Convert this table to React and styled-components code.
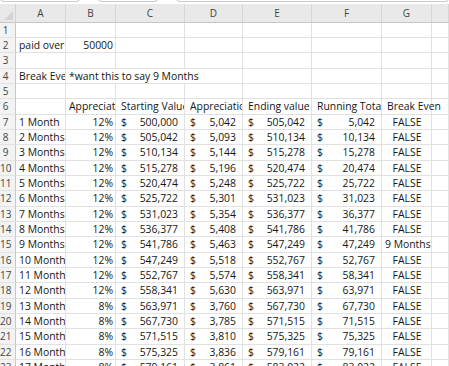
import React from 'react';
import styled, { createGlobalStyle } from 'styled-components';

const GlobalStyle = createGlobalStyle`
  html, body {
    margin: 0;
    padding: 0;
    background: #ffffff;
    overflow: hidden;
  }
`;

const COLS = '16px 50px 50px 69px 58px 69px 70px 50px 1fr';
const ROW_H = '15.35px';

const Window = styled.div`
  width: 449px;
  height: 366px;
  overflow: hidden;
  font-family: "Open Sans", "Liberation Sans", sans-serif;
  font-size: 10.4px;
  color: #161616;
`;

const TopStrip = styled.div`
  height: 4px;
  display: flex;
  gap: 18px;
  background: #ffffff;
  overflow: hidden;
`;

const BarBox = styled.div`
  width: ${(p) => p.$w}px;
  flex: ${(p) => (p.$grow ? '1' : 'none')};
  height: 2px;
  margin-top: -2px;
  border: 1px solid #c9c9c9;
  border-radius: 0 0 4px 4px;
`;

const Sheet = styled.div`
  display: grid;
  grid-template-columns: ${COLS};
  grid-template-rows: 18.5px;
  grid-auto-rows: ${ROW_H};
`;

const Corner = styled.div`
  position: relative;
  background: #e9e9e9;
  border-bottom: 1px solid #c6c6c6;
  border-right: 1px solid #d2d2d2;

  &::after {
    content: "";
    position: absolute;
    right: 2px;
    bottom: 2px;
    border-style: solid;
    border-width: 0 0 9px 9px;
    border-color: transparent transparent #d4d4d4 transparent;
  }
`;

const ColHead = styled.div`
  background: #e9e9e9;
  border-bottom: 1px solid #c6c6c6;
  border-right: 1px solid #d6d6d6;
  color: #444;
  text-align: center;
  line-height: 19px;
  font-size: 10px;
`;

const RowHead = styled.div`
  background: #f3f3f3;
  border-right: 1px solid #c8c8c8;
  border-bottom: 1px solid #e2e2e2;
  color: #444;
  font-size: 10px;
  line-height: 15.5px;
  text-align: center;
  padding-right: 4px;
  white-space: nowrap;
  overflow: visible;
`;

const Cell = styled.div`
  grid-column: span ${(p) => p.$span || 1};
  border-right: 1px solid #e1e1e1;
  border-bottom: 1px solid #e1e1e1;
  line-height: 15.5px;
  white-space: nowrap;
  overflow: ${(p) => (p.$spill ? 'visible' : 'hidden')};
  position: ${(p) => (p.$spill ? 'relative' : 'static')};
  z-index: ${(p) => (p.$spill ? 1 : 'auto')};
  text-align: ${(p) => p.$align || 'left'};
  padding: ${(p) => (p.$indent ? '0 2px 0 5px' : '0 2px 0 3px')};
`;

const Money = styled(Cell)`
  display: flex;
  justify-content: space-between;
  padding: 0 6px 0 5px;
`;

const rows = [
  ['1 Month', '12%', '500,000', '5,042', '505,042', '5,042', 'FALSE'],
  ['2 Months', '12%', '505,042', '5,093', '510,134', '10,134', 'FALSE'],
  ['3 Months', '12%', '510,134', '5,144', '515,278', '15,278', 'FALSE'],
  ['4 Months', '12%', '515,278', '5,196', '520,474', '20,474', 'FALSE'],
  ['5 Months', '12%', '520,474', '5,248', '525,722', '25,722', 'FALSE'],
  ['6 Months', '12%', '525,722', '5,301', '531,023', '31,023', 'FALSE'],
  ['7 Months', '12%', '531,023', '5,354', '536,377', '36,377', 'FALSE'],
  ['8 Months', '12%', '536,377', '5,408', '541,786', '41,786', 'FALSE'],
  ['9 Months', '12%', '541,786', '5,463', '547,249', '47,249', '9 Months'],
  ['10 Months', '12%', '547,249', '5,518', '552,767', '52,767', 'FALSE'],
  ['11 Months', '12%', '552,767', '5,574', '558,341', '58,341', 'FALSE'],
  ['12 Months', '12%', '558,341', '5,630', '563,971', '63,971', 'FALSE'],
  ['13 Months', '8%', '563,971', '3,760', '567,730', '67,730', 'FALSE'],
  ['14 Months', '8%', '567,730', '3,785', '571,515', '71,515', 'FALSE'],
  ['15 Months', '8%', '571,515', '3,810', '575,325', '75,325', 'FALSE'],
  ['16 Months', '8%', '575,325', '3,836', '579,161', '79,161', 'FALSE'],
  ['17 Months', '8%', '579,161', '3,861', '583,022', '83,022', 'FALSE'],
];

const letters = ['A', 'B', 'C', 'D', 'E', 'F', 'G', ''];

function Empty({ count }) {
  return Array.from({ length: count }, (_, i) => <Cell key={i} />);
}

function DataRow({ n, row }) {
  const [label, rate, start, appr, end, total, flag] = row;
  return (
    <>
      <RowHead>{n}</RowHead>
      <Cell>{label}</Cell>
      <Cell $align="right">{rate}</Cell>
      <Money><span>$</span><span>{start}</span></Money>
      <Money><span>$</span><span>{appr}</span></Money>
      <Money><span>$</span><span>{end}</span></Money>
      <Money><span>$</span><span>{total}</span></Money>
      <Cell $align="center" $spill>{flag}</Cell>
      <Cell />
    </>
  );
}

export default function App() {
  return (
    <Window>
      <GlobalStyle />
      <TopStrip>
        <BarBox $w={78} />
        <BarBox $w={58} />
        <BarBox $grow />
      </TopStrip>
      <Sheet>
        <Corner />
        {letters.map((l, i) => (
          <ColHead key={i}>{l}</ColHead>
        ))}

        <RowHead>1</RowHead>
        <Empty count={8} />

        <RowHead>2</RowHead>
        <Cell>paid over</Cell>
        <Cell $align="right">50000</Cell>
        <Empty count={6} />

        <RowHead>3</RowHead>
        <Empty count={8} />

        <RowHead>4</RowHead>
        <Cell>Break Even</Cell>
        <Cell $span={3}>*want this to say 9 Months</Cell>
        <Empty count={4} />

        <RowHead>5</RowHead>
        <Empty count={8} />

        <RowHead>6</RowHead>
        <Cell />
        <Cell>Appreciation</Cell>
        <Cell $indent>Starting Value</Cell>
        <Cell $indent>Appreciation</Cell>
        <Cell $indent>Ending value</Cell>
        <Cell $indent>Running Total</Cell>
        <Cell $indent $spill>Break Even</Cell>
        <Cell />

        {rows.map((row, i) => (
          <DataRow key={i} n={i + 7} row={row} />
        ))}
      </Sheet>
    </Window>
  );
}
